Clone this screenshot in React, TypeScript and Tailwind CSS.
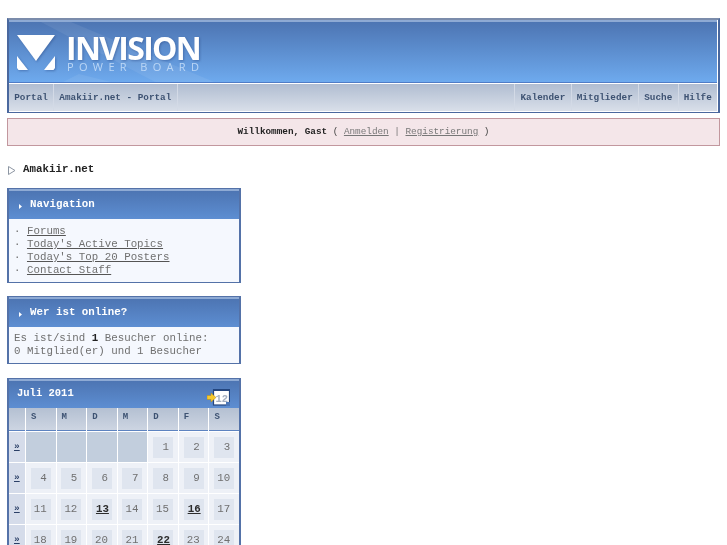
import React from "react";

const mono = "font-['Liberation_Mono',monospace]";

function Logo() {
  return (
    <div className="relative h-[63px] bg-gradient-to-b from-[#4d75b3] to-[#6eaaee] overflow-hidden border-t-2 border-t-[#8eaad4] border-b border-b-[#4f7cc6]">
      <svg className="absolute left-0 top-0" width="300" height="62" viewBox="0 0 300 62">
        <polygon points="32,0 62,0 210,62 150,62" fill="#ffffff" opacity="0.07" />
        <polygon points="50,62 70,52 110,62" fill="#ffffff" opacity="0.07" />
      </svg>
      <div className="relative flex items-start pl-[8px] pt-[13px] gap-[11px]">
        <svg width="38" height="35" viewBox="0 0 38 35" className="shrink-0 drop-shadow-[1px_1px_1px_rgba(40,70,130,0.45)]">
          <polygon points="0,0 38,0 19,26" fill="#ffffff" />
          <polygon points="0,21 0,33 1.5,35 11,35" fill="#ffffff" />
          <polygon points="38,21 38,33 36.5,35 27,35" fill="#ffffff" />
        </svg>
        <div className="flex flex-col mt-[-1px]">
          <div className="font-['Open_Sans',sans-serif] font-bold text-white text-[32px] leading-[27px] tracking-[-1.7px] drop-shadow-[1px_1px_1px_rgba(40,70,130,0.45)]">INVISION</div>
          <div className="font-['Open_Sans',sans-serif] text-[#bcd7f6] text-[11px] leading-[10px] tracking-[5.35px] mt-[1px] ml-[1px] whitespace-nowrap">POWER BOARD</div>
        </div>
      </div>
    </div>
  );
}

function NavCell({ children }: { children: string }) {
  return (
    <div className="h-full flex items-center px-[5.25px] border-l border-l-[#d3dae6] first:border-l-0 text-[9.33px] font-bold text-[#3d5272] whitespace-nowrap">
      {children}
    </div>
  );
}

function BoxTitle({ children }: { children: React.ReactNode }) {
  return (
    <div className="h-[30px] pb-[1px] border-t-2 border-t-[#8eaad4] bg-gradient-to-b from-[#4d75b3] to-[#5d8ed2] flex items-center pl-[8px] text-white font-bold text-[10.8px] whitespace-nowrap">
      <svg width="12" height="8" viewBox="0 0 12 8" className="mr-[1px] mt-[3px] shrink-0">
        <polygon points="2,2 5,4.5 2,7" fill="#ffffff" />
      </svg>
      {children}
    </div>
  );
}

function CalIcon() {
  return (
    <svg width="23" height="17" viewBox="0 0 23 17">
      <rect x="6.5" y="1" width="16" height="15" fill="#ffffff" stroke="#24467f" strokeWidth="1.2" />
      <rect x="6" y="0" width="17" height="2" fill="#24467f" />
      <text x="8.5" y="13" fontSize="10.5" fill="#a4afc0" fontFamily="Liberation Mono">12</text>
      <polygon points="0,6.5 4,6.5 4,4 9,8.5 4,13 4,10.5 0,10.5" fill="#f6c92e" stroke="#b58a14" strokeWidth="0.5" />
      <rect x="19" y="13" width="4" height="4" fill="#4b77b8" />
    </svg>
  );
}

const weeks: (number | null)[][] = [
  [null, null, null, null, 1, 2, 3],
  [4, 5, 6, 7, 8, 9, 10],
  [11, 12, 13, 14, 15, 16, 17],
  [18, 19, 20, 21, 22, 23, 24],
];
const bold = [13, 16, 22];

function Calendar() {
  return (
    <div className="mt-[14px] w-[234px] border-y border-x-2 border-[#5472a8] bg-white">
      <div className="h-[29px] border-t-2 border-t-[#8eaad4] bg-gradient-to-b from-[#4d75b3] to-[#5d8ed2] flex items-center justify-between pl-[8px] pr-[9px] pb-[2px] text-white font-bold text-[10.5px]">
        <span>Juli 2011</span>
        <span className="mt-[8px] flex"><CalIcon /></span>
      </div>
      <div className="grid grid-cols-[16px_repeat(7,1fr)] gap-[1px] bg-white">
        <div className="h-[23px] bg-gradient-to-b from-[#b4c0d2] to-[#cdd5e2] border-b border-b-[#5d83c0]" />
        {["S", "M", "D", "M", "D", "F", "S"].map((d, i) => (
          <div key={i} className="h-[23px] bg-gradient-to-b from-[#b4c0d2] to-[#cdd5e2] border-b border-b-[#5d83c0] pl-[5px] pb-[2px] flex items-center text-[9px] font-bold text-[#3d5272]">{d}</div>
        ))}
        {weeks.map((w, i) => (
          <React.Fragment key={i}>
            <div className="h-[30px] bg-[#d5dcea] flex items-center pl-[5px] text-[9.5px] font-bold text-[#2a3f66] underline">»</div>
            {w.map((d, j) =>
              d === null ? (
                <div key={j} className="h-[30px] bg-[#c2cedd]" />
              ) : (
                <div key={j} className="h-[30px] bg-[#eef1f7] flex items-center justify-center">
                  <div className={`w-[20px] h-[21px] bg-[#dfe5ef] flex items-center justify-end text-[10.8px] ${bold.includes(d) ? "font-bold text-[#2c2c2c] underline pr-[3px]" : "text-[#707070] pr-[4px]"}`}>{d}</div>
                </div>
              )
            )}
          </React.Fragment>
        ))}
      </div>
    </div>
  );
}

export default function App() {
  return (
    <div className={`${mono} w-[727px] h-[545px] overflow-hidden bg-white px-[7px] pt-[18px] text-[#333] blur-[0.35px]`}>
      <div className="border-y border-x-2 border-[#4a689e] border-t-2 border-t-[#7b8cab] bg-white pb-[1px] pr-[1px]">
        <Logo />
        <div className="h-[27px] mt-[1px] bg-gradient-to-b from-[#b0bdd1] to-[#d9dfe9] flex justify-between">
          <div className="flex items-center h-full">
            <NavCell>Portal</NavCell>
            <NavCell>Amakiir.net - Portal</NavCell>
            <div className="h-full border-l border-l-[#d3dae6]" />
          </div>
          <div className="flex h-full border-l border-l-[#d3dae6]">
            <NavCell>Kalender</NavCell>
            <NavCell>Mitglieder</NavCell>
            <NavCell>Suche</NavCell>
            <NavCell>Hilfe</NavCell>
          </div>
        </div>
      </div>

      <div className="mt-[5px] h-[28px] border border-[#c2979e] bg-[#f4e6e9] flex items-center justify-center text-[9.33px] whitespace-pre">
        <span className="font-bold text-[#222]">Willkommen, Gast</span>
        <span className="text-[#444]"> ( </span>
        <span className="underline text-[#777]">Anmelden</span>
        <span className="text-[#777]"> | </span>
        <span className="underline text-[#777]">Registrierung</span>
        <span className="text-[#444]"> )</span>
      </div>

      <div className="mt-[16px] h-[14px] flex items-center text-[10.8px] font-bold text-[#222]">
        <svg width="8" height="9" viewBox="0 0 8 9" className="ml-[1px] mr-[7px] mt-[2px]">
          <polygon points="0.5,0.5 7,4.5 0.5,8.5" fill="#fff" stroke="#8d96a3" />
        </svg>
        Amakiir.net
      </div>

      <div className="mt-[12px] w-[234px] border-y border-x-2 border-[#5472a8] bg-[#f5f8fe]">
        <BoxTitle>Navigation</BoxTitle>
        <ul className="pl-[5px] pt-[6px] pb-[5px] text-[10.8px] leading-[13px] text-[#707070]">
          {["Forums", "Today's Active Topics", "Today's Top 20 Posters", "Contact Staff"].map((t) => (
            <li key={t} className="whitespace-pre">· <span className="underline decoration-[#555]">{t}</span></li>
          ))}
        </ul>
      </div>

      <div className="mt-[13px] w-[234px] border-y border-x-2 border-[#5472a8] bg-[#f5f8fe]">
        <BoxTitle>Wer ist online?</BoxTitle>
        <div className="pl-[5px] pt-[5px] pb-[5px] text-[10.8px] leading-[13px] text-[#707070] whitespace-pre">
          <div>Es ist/sind <b className="text-[#222]">1</b> Besucher online:</div>
          <div>0 Mitglied(er) und 1 Besucher</div>
        </div>
      </div>

      <Calendar />
    </div>
  );
}
